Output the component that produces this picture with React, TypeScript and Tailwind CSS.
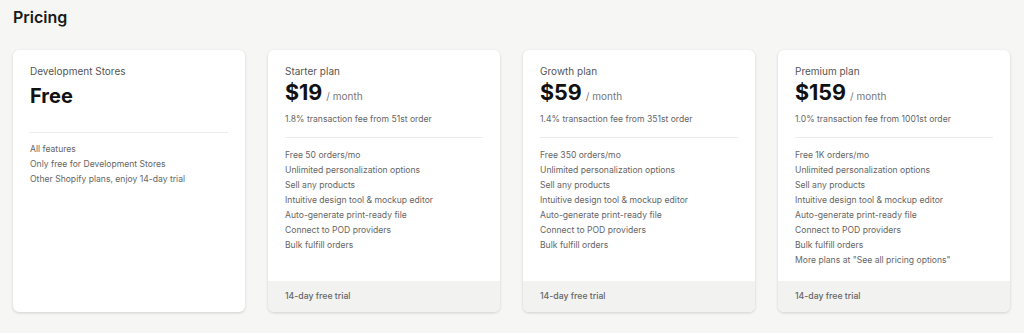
const plans = [
  {
    name: "Starter plan",
    price: "$19",
    fee: "1.8% transaction fee from 51st order",
    features: [
      "Free 50 orders/mo",
      "Unlimited personalization options",
      "Sell any products",
      "Intuitive design tool & mockup editor",
      "Auto-generate print-ready file",
      "Connect to POD providers",
      "Bulk fulfill orders",
    ],
  },
  {
    name: "Growth plan",
    price: "$59",
    fee: "1.4% transaction fee from 351st order",
    features: [
      "Free 350 orders/mo",
      "Unlimited personalization options",
      "Sell any products",
      "Intuitive design tool & mockup editor",
      "Auto-generate print-ready file",
      "Connect to POD providers",
      "Bulk fulfill orders",
    ],
  },
  {
    name: "Premium plan",
    price: "$159",
    fee: "1.0% transaction fee from 1001st order",
    features: [
      "Free 1K orders/mo",
      "Unlimited personalization options",
      "Sell any products",
      "Intuitive design tool & mockup editor",
      "Auto-generate print-ready file",
      "Connect to POD providers",
      "Bulk fulfill orders",
      'More plans at "See all pricing options"',
    ],
  },
];

function FeatureList({ items }: { items: string[] }) {
  return (
    <ul className="flex flex-col">
      {items.map((f) => (
        <li key={f} className="text-[8.6px] leading-[15px] text-[#666]">
          {f}
        </li>
      ))}
    </ul>
  );
}

export default function App() {
  return (
    <div
      className="min-h-[333px] bg-[#f6f6f5] px-[13px] pt-[6px] pb-[20px]"
      style={{ fontFamily: "Inter, 'Noto Sans', sans-serif" }}
    >
      <h1 className="text-[16px] leading-[22px] font-semibold text-[#1a1a1a]">Pricing</h1>

      <div className="mt-[22px] flex gap-[23px] items-stretch">
        {/* free card */}
        <div className="w-[232px] h-[262px] rounded-[6px] bg-white shadow-[0_1px_3px_rgba(0,0,0,0.16)] px-[17px] pt-[13px]">
          <p className="text-[10px] leading-[16px] text-[#555]">Development Stores</p>
          <p className="mt-[4px] text-[20px] leading-[26px] font-bold text-[#111]">Free</p>
          <div className="mt-[23px] border-t border-[#ececec]" />
          <div className="mt-[9px]">
            <FeatureList
              items={[
                "All features",
                "Only free for Development Stores",
                "Other Shopify plans, enjoy 14-day trial",
              ]}
            />
          </div>
        </div>

        {plans.map((p) => (
          <div
            key={p.name}
            className="w-[232px] h-[262px] rounded-[6px] bg-white shadow-[0_1px_3px_rgba(0,0,0,0.16)] flex flex-col overflow-hidden"
          >
            <div className="flex-1 px-[17px] pt-[13px]">
              <p className="text-[10px] leading-[16px] text-[#555]">{p.name}</p>
              <div className="flex items-baseline gap-[4px]">
                <span className="text-[21.5px] leading-[26px] font-bold text-[#111]">{p.price}</span>
                <span className="text-[10px] text-[#777]">/ month</span>
              </div>
              <p className="mt-[7px] text-[8.6px] leading-[14px] text-[#666]">{p.fee}</p>
              <div className="mt-[11px] border-t border-[#ececec]" />
              <div className="mt-[10px]">
                <FeatureList items={p.features} />
              </div>
            </div>
            <div className="h-[31px] bg-[#f2f2f1] px-[17px] flex items-center text-[8.7px] font-medium text-[#666]">
              14-day free trial
            </div>
          </div>
        ))}
      </div>
    </div>
  );
}
